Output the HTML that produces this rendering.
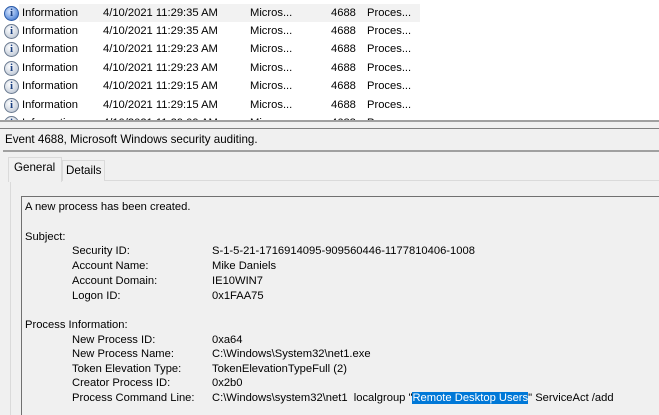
<!DOCTYPE html>
<html><head><style>
*{margin:0;padding:0;box-sizing:border-box}
html,body{width:659px;height:415px;overflow:hidden}
body{background:#f0f0f0;font-family:"Liberation Sans",sans-serif;font-size:11.2px;color:#000;position:relative}
.a{position:absolute;white-space:nowrap}
#list{position:absolute;left:0;top:0;width:659px;height:120px;background:#fff;overflow:hidden}
.row{position:absolute;left:0;height:18px;width:420px}
.row span{position:absolute;top:3px}
.ic{position:absolute;left:4px;top:2px;width:15px;height:15px;border-radius:50%;border:1px solid #6a7a90;background:radial-gradient(circle at 40% 35%,#fff,#c8d0dc 70%,#8c9ab0);}
.ic.b{border-color:#2a5aa8;background:radial-gradient(circle at 40% 35%,#dbe8ff,#6f9be0 60%,#2a5fb8)}
.ic::after{content:"i";position:absolute;left:0;right:0;top:0;text-align:center;font:bold 11px "Liberation Serif",serif;color:#1a3f80;line-height:13px}
</style></head><body>
<div id="list">
<div class="row" style="top:4px;background:#f2f2f2;left:19px;width:401px"></div>
<div class="row" style="top:4px"><div class="ic b"></div><span style="left:22px">Information</span><span style="left:103px">4/10/2021 11:29:35 AM</span><span style="left:250px">Micros...</span><span style="left:331px">4688</span><span style="left:367px">Proces...</span></div>
<div class="row" style="top:22px"><div class="ic"></div><span style="left:22px">Information</span><span style="left:103px">4/10/2021 11:29:35 AM</span><span style="left:250px">Micros...</span><span style="left:331px">4688</span><span style="left:367px">Proces...</span></div>
<div class="row" style="top:40px"><div class="ic"></div><span style="left:22px">Information</span><span style="left:103px">4/10/2021 11:29:23 AM</span><span style="left:250px">Micros...</span><span style="left:331px">4688</span><span style="left:367px">Proces...</span></div>
<div class="row" style="top:59px"><div class="ic"></div><span style="left:22px">Information</span><span style="left:103px">4/10/2021 11:29:23 AM</span><span style="left:250px">Micros...</span><span style="left:331px">4688</span><span style="left:367px">Proces...</span></div>
<div class="row" style="top:77px"><div class="ic"></div><span style="left:22px">Information</span><span style="left:103px">4/10/2021 11:29:15 AM</span><span style="left:250px">Micros...</span><span style="left:331px">4688</span><span style="left:367px">Proces...</span></div>
<div class="row" style="top:96px"><div class="ic"></div><span style="left:22px">Information</span><span style="left:103px">4/10/2021 11:29:15 AM</span><span style="left:250px">Micros...</span><span style="left:331px">4688</span><span style="left:367px">Proces...</span></div>
<div class="row" style="top:114px"><div class="ic"></div><span style="left:22px">Information</span><span style="left:103px">4/10/2021 11:29:09 AM</span><span style="left:250px">Micros...</span><span style="left:331px">4688</span><span style="left:367px">Proces...</span></div>
</div>
<div class="a" style="left:0;top:120px;width:659px;height:2px;background:#a0a0a0"></div>
<div class="a" style="left:0;top:128px;width:659px;height:1px;background:#808080"></div>
<div class="a" style="left:5px;top:133px;font-size:11.6px">Event 4688, Microsoft Windows security auditing.</div>
<div class="a" style="left:3px;top:150px;width:656px;height:2px;background:#a0a0a0"></div>
<div class="a" style="left:10px;top:180px;width:649px;height:235px;border-left:1px solid #dadada;border-top:1px solid #dadada"></div>
<div class="a" style="left:62px;top:160px;width:43px;height:21px;border:1px solid #dadada;border-bottom:none;background:#f0f0f0"></div>
<div class="a" style="left:66px;top:164px;font-size:11.6px">Details</div>
<div class="a" style="left:8px;top:157px;width:54px;height:25px;border:1px solid #dadada;border-bottom:none;background:#f0f0f0"></div>
<div class="a" style="left:14px;top:161px;font-size:11.6px">General</div>
<div class="a" style="left:21px;top:196px;width:660px;height:230px;border:1px solid #707070"></div>
<div class="a" style="left:25px;top:201px">A new process has been created.</div>
<div class="a" style="left:25px;top:231px">Subject:</div>
<div class="a" style="left:72px;top:245px">Security ID:</div><div class="a" style="left:212px;top:245px">S-1-5-21-1716914095-909560446-1177810406-1008</div>
<div class="a" style="left:72px;top:260px">Account Name:</div><div class="a" style="left:212px;top:260px">Mike Daniels</div>
<div class="a" style="left:72px;top:275px">Account Domain:</div><div class="a" style="left:212px;top:275px">IE10WIN7</div>
<div class="a" style="left:72px;top:290px">Logon ID:</div><div class="a" style="left:212px;top:290px">0x1FAA75</div>
<div class="a" style="left:25px;top:319px">Process Information:</div>
<div class="a" style="left:72px;top:334px">New Process ID:</div><div class="a" style="left:212px;top:334px">0xa64</div>
<div class="a" style="left:72px;top:348px">New Process Name:</div><div class="a" style="left:212px;top:348px">C:\Windows\System32\net1.exe</div>
<div class="a" style="left:72px;top:363px">Token Elevation Type:</div><div class="a" style="left:212px;top:363px">TokenElevationTypeFull (2)</div>
<div class="a" style="left:72px;top:377px">Creator Process ID:</div><div class="a" style="left:212px;top:377px">0x2b0</div>
<div class="a" style="left:72px;top:392px">Process Command Line:</div><div class="a" style="left:212px;top:392px">C:\Windows\system32\net1&nbsp; localgroup "<span style="background:#0078d7;color:#fff">Remote Desktop Users</span>" ServiceAct /add</div>
</body></html>
